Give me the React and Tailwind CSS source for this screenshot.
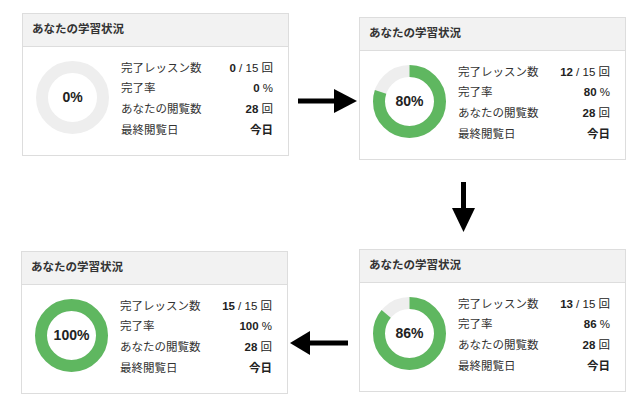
import React from "react";

const font = { fontFamily: '"Liberation Sans", "Noto Sans CJK JP", sans-serif' };

const Donut = ({ pct }) => {
    const r = 30.5;
    const c = 2 * Math.PI * r;
    return (
        <div className="relative w-[73px] h-[73px] shrink-0">
            <svg width="73" height="73" viewBox="0 0 73 73">
                <circle cx="36.5" cy="36.5" r={r} fill="none" stroke="#eeeeee" strokeWidth="12" />
                {pct > 0 && (
                    <circle
                        cx="36.5" cy="36.5" r={r} fill="none" stroke="#5fb760" strokeWidth="12"
                        strokeDasharray={`${(c * pct) / 100} ${c}`}
                        transform="rotate(-90 36.5 36.5)"
                    />
                )}
            </svg>
            <div className="absolute inset-0 flex items-center justify-center text-[14px] font-bold text-[#222]">
                {pct}%
            </div>
        </div>
    );
};

const Panel = ({ done, pct, className }) => {
    const rows = [
        ["完了レッスン数", <><b>{done}</b><span> / 15 回</span></>],
        ["完了率", <><b>{pct}</b><span> %</span></>],
        ["あなたの閲覧数", <><b>28</b><span> 回</span></>],
        ["最終閲覧日", <b>今日</b>],
    ];
    return (
        <div className={`w-[267px] h-[143px] border border-[#dddddd] bg-white flex flex-col ${className}`}>
            <div className="h-[33px] bg-[#f2f2f2] border-b border-[#dddddd] flex items-center pl-[9px] text-[11.5px] font-bold text-[#333]">
                あなたの学習状況
            </div>
            <div className="flex items-start pl-[13px] pr-[15px] pt-[14px]">
                <Donut pct={pct} />
                <div className="ml-[12px] flex-1 flex flex-col gap-[4px] -mt-[1px]">
                    {rows.map(([label, value]) => (
                        <div key={label} className="flex justify-between items-center h-[16.7px] text-[11.5px] text-[#333]">
                            <span>{label}</span>
                            <span className="text-[#222]">{value}</span>
                        </div>
                    ))}
                </div>
            </div>
        </div>
    );
};

const App = () => {
    return (
        <div className="w-[640px] h-[409px] bg-white overflow-hidden" style={font}>
            <div className="flex items-start pt-[13px]">
                <Panel done={0} pct={0} className="ml-[22px]" />
                <svg className="ml-[9px] mt-[76px]" width="59" height="24" viewBox="0 0 59 24">
                    <rect x="0" y="9.5" width="37" height="5" fill="#000" />
                    <polygon points="36,0 59,12 36,24" fill="#000" />
                </svg>
                <Panel done={12} pct={80} className="ml-[2px] mt-[4px]" />
            </div>
            <div className="flex pl-[452px] pt-[22px]">
                <svg width="23" height="50" viewBox="0 0 23 50">
                    <rect x="9" y="0" width="5" height="27" fill="#000" />
                    <polygon points="0,26 23,26 11.5,50" fill="#000" />
                </svg>
            </div>
            <div className="flex items-start pt-[17px]">
                <Panel done={15} pct={100} className="ml-[21px] mt-[2px]" />
                <svg className="ml-[2px] mt-[82px]" width="58" height="24" viewBox="0 0 58 24">
                    <polygon points="0,12 20,0 20,24" fill="#000" />
                    <rect x="19" y="9.5" width="39" height="5" fill="#000" />
                </svg>
                <Panel done={13} pct={86} className="ml-[11px]" />
            </div>
        </div>
    );
};

export default App;
